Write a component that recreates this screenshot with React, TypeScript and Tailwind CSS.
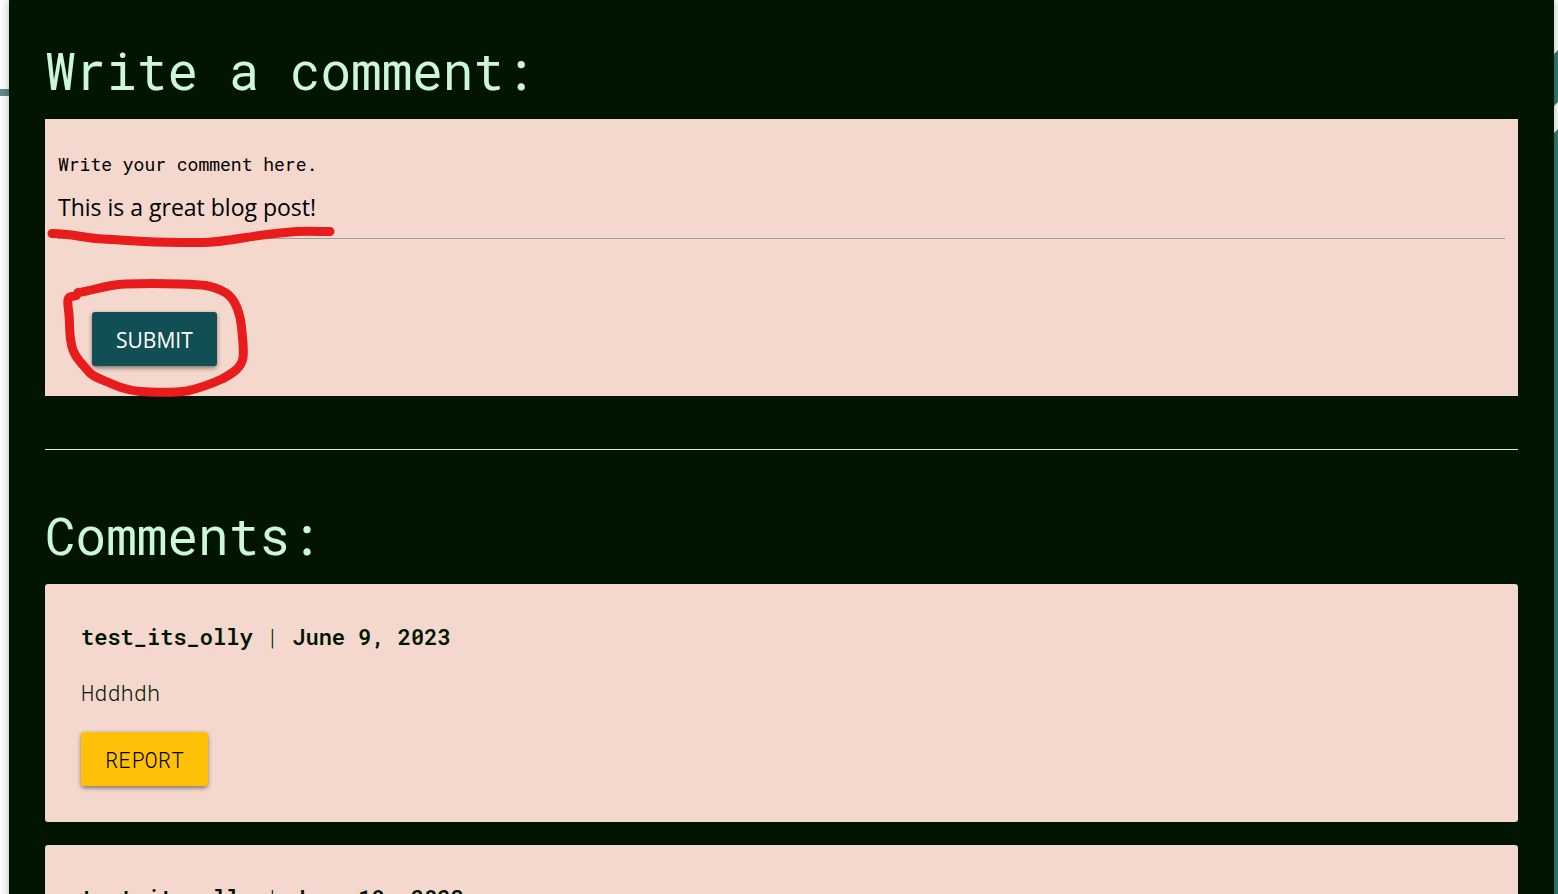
import React, { useState } from "react";

const mono = "font-['Roboto_Mono','DejaVu_Sans_Mono',monospace]";
const sans = "font-['Open_Sans','Noto_Sans',sans-serif]";
const raised = "rounded-[3px] shadow-[0_3px_5px_-1px_rgba(0,0,0,0.35),0_1px_4px_rgba(0,0,0,0.25)]";

type Comment = { id: number; author: string; date: string; body: string };

const comments: Comment[] = [
  { id: 1, author: "test_its_olly", date: "June 9, 2023", body: "Hddhdh" },
  { id: 2, author: "test_its_olly", date: "June 10, 2023", body: "Hddhdh" },
];

function Heading({ children }: { children: React.ReactNode }) {
  return <h2 className="text-[51px] font-[450] leading-[52px] text-[#cdf7dd]">{children}</h2>;
}

function Backdrop() {
  return (
    <>
      <svg className="absolute left-0 top-0 h-[200px] w-[9px]" viewBox="0 0 9 200" aria-hidden="true">
        <rect x="0" y="89" width="9" height="7" fill="#5f8a87" />
      </svg>
      <svg className="absolute right-0 top-0 h-[894px] w-1" viewBox="0 0 4 894" aria-hidden="true">
        <path d="M0 54 4 50V102L0 106Z" fill="#347a72" />
        <path d="M0 133 4 129V894H0Z" fill="#347a72" />
      </svg>
    </>
  );
}

function Marker() {
  return (
    <svg
      className="pointer-events-none absolute left-0 top-0 h-[290px] w-[300px]"
      viewBox="45 119 300 290"
      fill="none"
      stroke="#e81c1c"
      strokeWidth="9"
      strokeLinecap="round"
      strokeLinejoin="round"
      aria-hidden="true"
    >
      <path d="M52 233.500C72 233.500 83 238 103 239C130 240.500 150 242.500 180 242.500C205 242.500 215 242.500 229 240C250 237 270 233 297 231.500C308 231 320 231.500 330 231.500" />
      <path d="M78 292.500C92 291 105 285 125 284C145 283.300 165 283.500 180 284C203 284.600 213 285 226 293C238 301 241 319 242 332C243 342 244 350 243 358C241 369 231 374 222 379C211 384 200 388 187 391C176 392.500 163 392.500 150 392C134 392 123 389 112 384C104 380 94 378 89 372C82 363 73 357 71 342C69 331 70 324 69 315C68.500 307 66 299 70 297C73 295 77 298 78 292.500" />
    </svg>
  );
}

function CommentCard({ comment }: { comment: Comment }) {
  return (
    <article className="rounded-[3px] bg-[#f4d8cd] p-9 font-[350] text-[#021402]">
      <p className="text-[22px] leading-[34px]">
        <b className="font-semibold">{comment.author}</b> | <b className="font-semibold">{comment.date}</b>
      </p>
      <p className="mt-[22px] text-[22px] leading-[34px]">{comment.body}</p>
      <button type="button" className={`mt-[22px] h-[54px] bg-[#ffc107] px-6 text-[22px] font-[350] text-black ${raised}`}>
        REPORT
      </button>
    </article>
  );
}

export default function App() {
  const [text, setText] = useState("This is a great blog post!");

  return (
    <div className={`relative h-screen overflow-hidden bg-[#fdfdfd] pl-[9px] pr-1 ${mono}`}>
      <Backdrop />
      <main className="relative min-h-full bg-[#021402] px-9 pt-[45px] shadow-[0_0_8px_rgba(0,0,0,0.3)]">
        <Heading>Write a comment:</Heading>
        <form
          className="relative mt-[22px] bg-[#f4d8cd] px-[13px] pb-[30px] pt-[31px]"
          onSubmit={(event) => event.preventDefault()}
        >
          <label htmlFor="comment" className="block text-[18px] leading-7 text-black">
            Write your comment here.
          </label>
          <textarea
            id="comment"
            rows={1}
            value={text}
            onChange={(event) => setText(event.target.value)}
            className={`block h-[61px] w-full resize-none overflow-hidden border-b border-[#9e9e9e] pt-3 text-[23px] leading-[34px] text-black outline-none ${sans}`}
          />
          <button
            type="submit"
            className={`ml-[34px] mt-[73px] block h-[54px] bg-[#124f55] px-6 pt-1 text-[21px] text-white ${sans} ${raised}`}
          >
            SUBMIT
          </button>
          <Marker />
        </form>
        <hr className="mb-[60px] mt-[53px] border-t border-[#cdf7dd]" />
        <Heading>Comments:</Heading>
        <section className="mt-[22px] flex flex-col gap-[23px]">
          {comments.map((comment) => (
            <CommentCard key={comment.id} comment={comment} />
          ))}
        </section>
      </main>
    </div>
  );
}
